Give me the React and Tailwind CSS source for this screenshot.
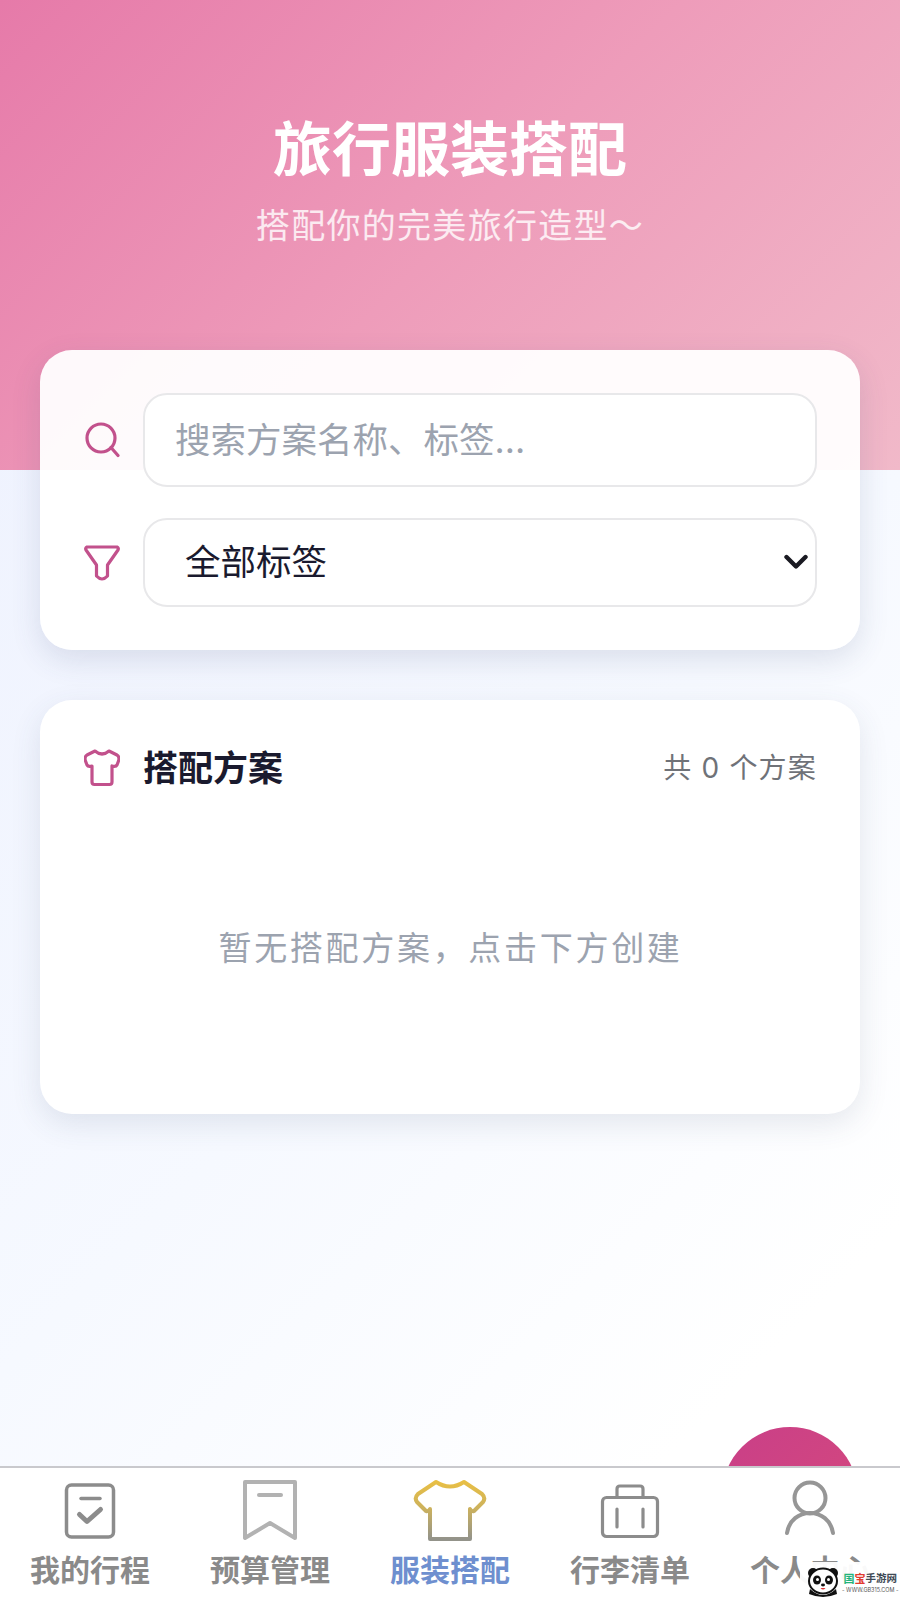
const FONT = "font-['Inter','Noto_Sans_CJK_SC',sans-serif]";

const SearchIcon = () => (
  <svg width="36" height="36" viewBox="0 0 36 36" fill="none" stroke="#c2518c" strokeWidth="3.2" strokeLinecap="round">
    <circle cx="17" cy="16" r="14" />
    <path d="M27 25.5 L34 33.5" />
  </svg>
);

const FilterIcon = () => (
  <svg width="36" height="36" viewBox="0 0 36 36" fill="none" stroke="#c2518c" strokeWidth="3.2" strokeLinejoin="round">
    <path d="M3 2 H33 Q35 3 34 5 L23.5 20 V31 Q18 37 12.5 31 V20 L2 5 Q1 3 3 2 Z" />
  </svg>
);

const ShirtIcon = () => (
  <svg width="36" height="38" viewBox="0 0 36 38" fill="none" stroke="#c2518c" strokeWidth="3.2" strokeLinejoin="round">
    <path d="M11 2 Q18 8 25 2 L33 6 Q36 8 34.5 12 L33 16 Q32 18 28 17 V33 Q28 35.5 25.5 35.5 H10.5 Q8 35.5 8 33 V17 Q4 18 3 16 L1.5 12 Q0 8 3 6 Z" />
  </svg>
);

const TripIcon = () => (
  <svg width="80" height="64" viewBox="0 0 80 64" fill="none" stroke="#8c8c8c">
    <rect x="16.5" y="6" width="47" height="52" rx="5" strokeWidth="3.5" />
    <path d="M31 19.5 H50" strokeWidth="3.5" strokeLinecap="round" />
    <path d="M29.5 35.5 L37 42.5 L50.5 30.5" strokeWidth="5" strokeLinecap="round" strokeLinejoin="round" />
  </svg>
);

const BudgetIcon = () => (
  <svg width="80" height="64" viewBox="0 0 80 64" fill="none" stroke="#b2b2b2" strokeWidth="4" strokeLinejoin="round">
    <path d="M15 3 H65 V59 L40 44 L15 59 Z" />
    <path d="M29 16 H51" strokeLinecap="round" />
  </svg>
);

const OutfitIcon = () => (
  <svg width="80" height="64" viewBox="0 0 80 64" fill="none" strokeWidth="4" strokeLinejoin="round">
    <defs>
      <linearGradient id="shirtGold" x1="0" y1="0" x2="0" y2="1">
        <stop offset="0" stopColor="#e8bf45" />
        <stop offset="0.45" stopColor="#cdb25c" />
        <stop offset="1" stopColor="#93938a" />
      </linearGradient>
    </defs>
    <path
      stroke="url(#shirtGold)"
      fill="#ffffff"
      d="M26 3 Q40 12 54 3 L72 15 Q76 19 73 23 L64 32 Q62 33 60 30 V60 H20 V30 Q18 33 16 32 L7 23 Q4 19 8 15 Z"
    />
  </svg>
);

const LuggageIcon = () => (
  <svg width="80" height="64" viewBox="0 0 80 64" fill="none" stroke="#8c8c8c" strokeWidth="3.2" strokeLinecap="round" strokeLinejoin="round">
    <rect x="12.5" y="18.5" width="55" height="39" rx="4" />
    <path d="M27 18 V10 Q27 7 30 7 H50 Q53 7 53 10 V18" />
    <path d="M27 30 V48 M53 30 V48" />
  </svg>
);

const UserIcon = () => (
  <svg width="80" height="64" viewBox="0 0 80 64" fill="none" stroke="#969696" strokeWidth="4" strokeLinecap="round">
    <circle cx="40" cy="19" r="15.5" />
    <path d="M17 54 C19 41 29 34 40 34 C51 34 61 41 63 54" />
  </svg>
);

const navItems = [
  { label: "我的行程", Icon: TripIcon },
  { label: "预算管理", Icon: BudgetIcon },
  { label: "服装搭配", Icon: OutfitIcon, active: true },
  { label: "行李清单", Icon: LuggageIcon },
  { label: "个人中心", Icon: UserIcon },
];

const Panda = () => (
  <svg width="32" height="30" viewBox="0 0 32 30">
    <circle cx="6" cy="6" r="5" fill="#111" />
    <circle cx="26" cy="6" r="5" fill="#111" />
    <path d="M3 22 Q16 34 29 22 L30 27 Q16 33 2 27 Z" fill="#111" />
    <ellipse cx="16" cy="14" rx="14" ry="12.5" fill="#fff" stroke="#111" strokeWidth="2" />
    <ellipse cx="10" cy="13" rx="4" ry="4.6" fill="#111" />
    <ellipse cx="22" cy="13" rx="4" ry="4.6" fill="#111" />
    <circle cx="10.5" cy="12.5" r="1.5" fill="#fff" />
    <circle cx="21.5" cy="12.5" r="1.5" fill="#fff" />
    <ellipse cx="16" cy="18" rx="2" ry="1.4" fill="#111" />
    <path d="M13.5 21 Q16 24 18.5 21 Z" fill="#d33" />
  </svg>
);

const App = () => {
  return (
    <div className={`${FONT} relative w-[900px] h-[1600px] overflow-hidden flex flex-col bg-[linear-gradient(135deg,#ecf0fe_0%,#f6f9ff_55%,#ffffff_85%)]`}>
      <div className="flex-1 flex flex-col">
        <header className="h-[470px] shrink-0 flex flex-col items-center pt-[112px] bg-[linear-gradient(135deg,#e67aa9_0%,#ee9cba_50%,#f1b9c9_100%)]">
          <h1 className="text-[59px] leading-[76px] font-bold text-white">旅行服装搭配</h1>
          <p className="mt-[14px] text-[34px] leading-[48px] tracking-[1.3px] text-white/80">搭配你的完美旅行造型～</p>
        </header>

        <main className="-mt-[120px] px-10 flex flex-col gap-[50px]">
          <section className="bg-white/95 rounded-[32px] pl-[44px] pr-[43px] pt-[43px] pb-[43px] flex flex-col gap-[31px] shadow-[0_10px_30px_rgba(60,70,110,0.14)]">
            <div className="flex items-center gap-[23px]">
              <SearchIcon />
              <input
                className="flex-1 min-w-0 h-[94px] px-[30px] bg-white border-2 border-[#e8e8ea] rounded-[24px] text-[35.5px] outline-none placeholder:text-[#9ca3af]"
                placeholder="搜索方案名称、标签..."
                readOnly
              />
            </div>
            <div className="flex items-center gap-[23px]">
              <FilterIcon />
              <div className="relative flex-1 min-w-0">
                <select className="w-full h-[89px] pl-[40px] pr-[48px] appearance-none bg-white border-2 border-[#e8e8ea] rounded-[24px] text-[35.5px] text-[#1a1a2e] outline-none">
                  <option>全部标签</option>
                </select>
                <svg
                  className="absolute right-[9px] top-[36px]"
                  width="24"
                  height="16"
                  viewBox="0 0 24 16"
                  fill="none"
                  stroke="#1a1a22"
                  strokeWidth="4.4"
                  strokeLinecap="round"
                  strokeLinejoin="round"
                >
                  <path d="M2.5 3 L12 12.5 L21.5 3" />
                </svg>
              </div>
            </div>
          </section>

          <section className="h-[414px] bg-white rounded-[32px] pl-[44px] pr-[43px] pt-[46px] flex flex-col shadow-[0_10px_30px_rgba(60,70,110,0.12)]">
            <div className="flex items-center justify-between">
              <div className="flex items-center gap-[23px]">
                <ShirtIcon />
                <h2 className="text-[35px] leading-[44px] font-bold text-[#1a1a2e]">搭配方案</h2>
              </div>
              <span className="text-[28px] tracking-[1.2px] text-[#6f7278]">共 0 个方案</span>
            </div>
            <p className="mt-[136px] text-center text-[33px] leading-[44px] tracking-[2.7px] text-[#9ca3af]">
              暂无搭配方案，点击下方创建
            </p>
          </section>
        </main>
      </div>

      {/* fab, mostly hidden behind the tab bar */}
      <div className="absolute right-[42px] top-[1427px] w-[136px] h-[136px] rounded-full bg-[linear-gradient(135deg,#c93f88,#d64a7c)]" />

      <nav className="relative z-10 h-[134px] shrink-0 bg-white border-t-2 border-[#c9c9cd] flex pt-[11px]">
        {navItems.map(({ label, Icon, active }) => (
          <div key={label} className="flex-1 flex flex-col items-center">
            <Icon />
            <span className={`mt-[7px] text-[30px] leading-[40px] font-bold whitespace-nowrap ${active ? "text-[#6e8fcf]" : "text-[#8a8a8a]"}`}>
              {label}
            </span>
          </div>
        ))}
      </nav>

      {/* site watermark */}
      <div className="absolute z-20 right-0 bottom-0 w-[100px] h-[38px] bg-white/95 flex items-center">
        <div className="ml-[7px] mt-[2px] shrink-0">
          <Panda />
        </div>
        <div className="flex flex-col items-center ml-[3px] mt-[3px]">
          <div className="flex items-center text-[11px] leading-[14px] font-bold">
            <span className="text-[#23b37a]">国</span>
            <span className="text-[#e23a2e]">宝</span>
            <span className="text-[#3f4a55] text-[10.5px] leading-[14px]">手游网</span>
          </div>
          <span className="text-[5.5px] leading-[8px] text-[#555] whitespace-nowrap">- WWW.GB315.COM -</span>
        </div>
      </div>
    </div>
  );
};

export default App;
